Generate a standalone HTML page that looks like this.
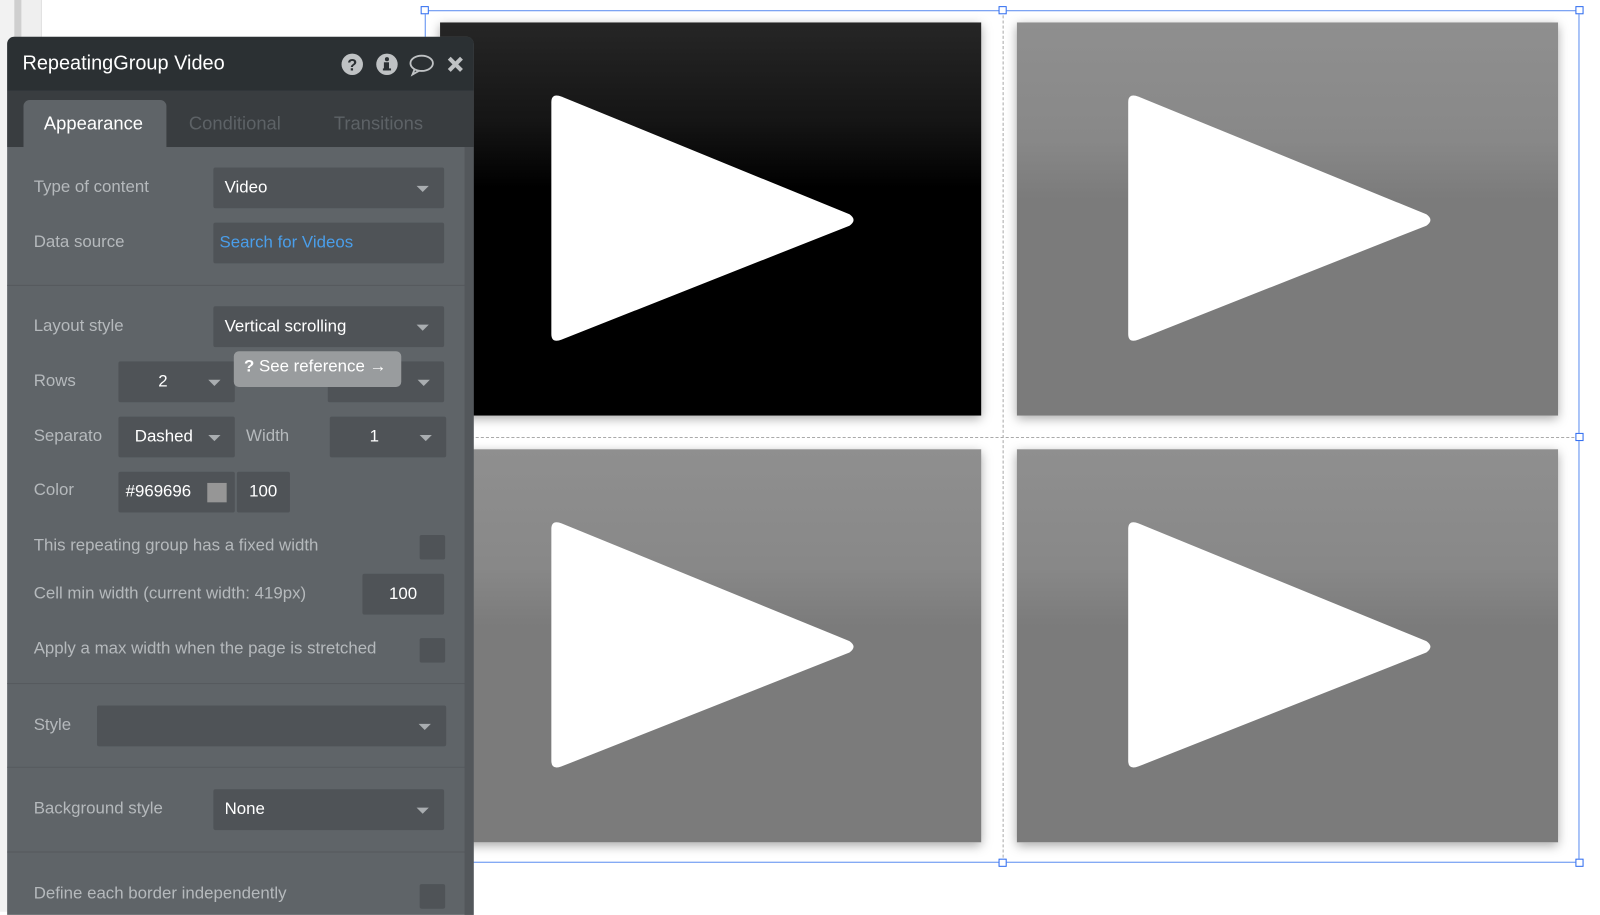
<!DOCTYPE html>
<html><head><meta charset="utf-8"><style>
*{margin:0;padding:0;box-sizing:border-box}
body{width:1600px;height:893px;overflow:hidden;background:#fff;font-family:"Liberation Sans",sans-serif;position:relative}
#w{position:absolute;left:0;top:0;width:1560px;height:880px;transform:scale(1.021);transform-origin:0 0}
.abs{position:absolute}
.cell{position:absolute;width:530px;height:385px;background:linear-gradient(#8f8f8f 0%,#888 30%,#7b7b7b 45%,#7b7b7b 100%);box-shadow:0 3px 10px rgba(0,0,0,.35)}
.cell.black{background:linear-gradient(#262626 0%,#151515 25%,#000 42%,#000 100%)}
.cell svg{position:absolute;left:105px;top:70px}
.h{position:absolute;width:8px;height:8px;border:1px solid #2d6bf0;background:#fff}
.panel{position:absolute;left:7px;top:36px;width:457px;height:860px;background:#5f6468;border-radius:7px 7px 0 0;overflow:hidden}
.lbl{position:absolute;color:#b5b9bc;font-size:16.5px}
.fld{position:absolute;background:#4f5357;color:#fff;font-size:16.5px;border-radius:2px}
.fld span{position:absolute;top:50%;transform:translateY(-50%)}
.arr{position:absolute;top:50%;margin-top:-2px;width:0;height:0;border-left:6px solid transparent;border-right:6px solid transparent;border-top:6px solid #a9adb0}
.sep{position:absolute;left:0;width:448px;height:1px;background:#565a5e}
.cb{position:absolute;width:25px;height:24px;background:#4f5357;border-radius:2px}
</style></head><body><div id="w">
<div class="abs" style="left:0;top:0;width:14px;height:893px;background:#f2f2f2"></div>
<div class="abs" style="left:14px;top:0;width:7px;height:893px;background:#cfcfcf"></div>
<div class="abs" style="left:21px;top:0;width:19px;height:893px;background:#efefef"></div>
<div class="abs" style="left:40px;top:0;width:1px;height:893px;background:#ddd"></div>

<div class="abs" style="left:416px;top:10px;width:1131px;height:835px;border:1px solid #5b8df0"></div>
<div class="abs" style="left:982px;top:10px;height:835px;border-left:1px dashed #aaa"></div>
<div class="abs" style="left:416px;top:428px;width:1131px;border-top:1px dashed #aaa"></div>

<div class="cell black" style="left:431px;top:22px"><svg width="310" height="250" viewBox="0 0 310 250"><path d="M4 12 Q4 2 14 6 L296 130 Q304 136 296 142 L14 262 Q4 266 4 256 Z" transform="translate(0,-3) scale(1,0.93)" fill="#fff"/></svg></div>
<div class="cell" style="left:996px;top:22px"><svg width="310" height="250" viewBox="0 0 310 250"><path d="M4 12 Q4 2 14 6 L296 130 Q304 136 296 142 L14 262 Q4 266 4 256 Z" transform="translate(0,-3) scale(1,0.93)" fill="#fff"/></svg></div>
<div class="cell" style="left:431px;top:440px"><svg width="310" height="250" viewBox="0 0 310 250"><path d="M4 12 Q4 2 14 6 L296 130 Q304 136 296 142 L14 262 Q4 266 4 256 Z" transform="translate(0,-3) scale(1,0.93)" fill="#fff"/></svg></div>
<div class="cell" style="left:996px;top:440px"><svg width="310" height="250" viewBox="0 0 310 250"><path d="M4 12 Q4 2 14 6 L296 130 Q304 136 296 142 L14 262 Q4 266 4 256 Z" transform="translate(0,-3) scale(1,0.93)" fill="#fff"/></svg></div>

<div class="h" style="left:412px;top:6px"></div>
<div class="h" style="left:978px;top:6px"></div>
<div class="h" style="left:1543px;top:6px"></div>
<div class="h" style="left:1543px;top:424px"></div>
<div class="h" style="left:978px;top:841px"></div>
<div class="h" style="left:1543px;top:841px"></div>

<div class="panel">
 <div class="abs" style="left:0;top:0;width:457px;height:53px;background:#2b3033"></div>
 <div class="abs" style="left:15px;top:15px;color:#fff;font-size:19.5px">RepeatingGroup Video</div>
 <svg class="abs" style="left:327px;top:16px" width="22" height="22"><circle cx="11" cy="11" r="10.5" fill="#bfc2c4"/><text x="11" y="17" text-anchor="middle" font-size="16" font-weight="bold" fill="#2b3033" font-family="Liberation Sans">?</text></svg>
 <svg class="abs" style="left:361px;top:16px" width="22" height="22"><circle cx="11" cy="11" r="10.5" fill="#bfc2c4"/><circle cx="11" cy="6" r="2" fill="#2b3033"/><rect x="8" y="9" width="5" height="8" fill="#2b3033"/><rect x="7" y="15" width="8" height="2" fill="#2b3033"/></svg>
 <svg class="abs" style="left:393px;top:17px" width="26" height="22"><ellipse cx="13" cy="9" rx="11" ry="7.5" fill="none" stroke="#bfc2c4" stroke-width="1.8"/><path d="M6 15 L4 20 L11 16" fill="none" stroke="#bfc2c4" stroke-width="1.8"/></svg>
 <svg class="abs" style="left:431px;top:19px" width="16" height="16"><path d="M2 2 L14 14 M14 2 L2 14" stroke="#bfc2c4" stroke-width="4"/></svg>
 <div class="abs" style="left:0;top:53px;width:457px;height:55px;background:#393d40"></div>
 <div class="abs" style="left:16px;top:62px;width:140px;height:47px;background:#5f6468;border-radius:6px 6px 0 0"></div>
 <div class="abs" style="left:36px;top:75px;color:#fff;font-size:18px">Appearance</div>
 <div class="abs" style="left:178px;top:75px;color:#5d6266;font-size:18px">Conditional</div>
 <div class="abs" style="left:320px;top:75px;color:#5d6266;font-size:18px">Transitions</div>
 <div class="abs" style="left:448px;top:108px;width:9px;height:760px;background:#53575b"></div>

 <div class="lbl" style="left:26px;top:138px">Type of content</div>
 <div class="fld" style="left:202px;top:128px;width:226px;height:40px"><span style="left:11px">Video</span><div class="arr" style="left:199px"></div></div>
 <div class="lbl" style="left:26px;top:192px">Data source</div>
 <div class="fld" style="left:202px;top:182px;width:226px;height:40px"><span style="left:6px;color:#4a9eea">Search for Videos</span></div>
 <div class="sep" style="top:243px"></div>
 <div class="lbl" style="left:26px;top:274px">Layout style</div>
 <div class="fld" style="left:202px;top:264px;width:226px;height:40px"><span style="left:11px">Vertical scrolling</span><div class="arr" style="left:199px"></div></div>
 <div class="lbl" style="left:26px;top:328px">Rows</div>
 <div class="fld" style="left:109px;top:318px;width:114px;height:40px"><span style="left:39px">2</span><div class="arr" style="left:88px"></div></div>
 <div class="fld" style="left:314px;top:318px;width:114px;height:40px"><div class="arr" style="left:88px"></div></div>
 <div class="abs" style="left:222px;top:308px;width:164px;height:35px;background:#999c9e;border-radius:5px;color:#fff;font-size:16.5px;padding:6px 0 0 10px"><b>?</b> See reference →</div>
 <div class="lbl" style="left:26px;top:382px">Separato</div>
 <div class="fld" style="left:109px;top:372px;width:114px;height:40px"><span style="left:16px">Dashed</span><div class="arr" style="left:88px"></div></div>
 <div class="lbl" style="left:234px;top:382px">Width</div>
 <div class="fld" style="left:316px;top:372px;width:114px;height:40px"><span style="left:39px">1</span><div class="arr" style="left:88px"></div></div>
 <div class="lbl" style="left:26px;top:435px">Color</div>
 <div class="fld" style="left:109px;top:426px;width:114px;height:40px"><span style="left:7px">#969696</span><div class="abs" style="left:87px;top:11px;width:19px;height:19px;background:#969696"></div></div>
 <div class="fld" style="left:225px;top:426px;width:52px;height:40px"><span style="left:12px">100</span></div>
 <div class="lbl" style="left:26px;top:489px">This repeating group has a fixed width</div>
 <div class="cb" style="left:404px;top:488px"></div>
 <div class="lbl" style="left:26px;top:536px">Cell min width (current width: 419px)</div>
 <div class="fld" style="left:348px;top:526px;width:80px;height:40px"><span style="left:26px">100</span></div>
 <div class="lbl" style="left:26px;top:590px">Apply a max width when the page is stretched</div>
 <div class="cb" style="left:404px;top:589px"></div>
 <div class="sep" style="top:633px"></div>
 <div class="lbl" style="left:26px;top:665px">Style</div>
 <div class="fld" style="left:88px;top:655px;width:342px;height:40px"><div class="arr" style="left:315px"></div></div>
 <div class="sep" style="top:715px"></div>
 <div class="lbl" style="left:26px;top:747px">Background style</div>
 <div class="fld" style="left:202px;top:737px;width:226px;height:40px"><span style="left:11px">None</span><div class="arr" style="left:199px"></div></div>
 <div class="sep" style="top:798px"></div>
 <div class="lbl" style="left:26px;top:830px">Define each border independently</div>
 <div class="cb" style="left:404px;top:830px"></div>
</div>
</div></body></html>
